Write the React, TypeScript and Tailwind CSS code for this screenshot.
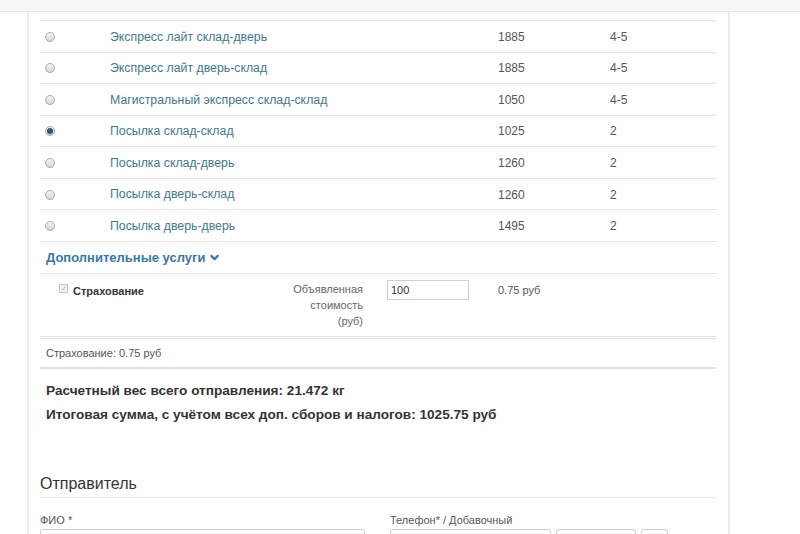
import { ChevronDown } from "lucide-react";

interface Tariff {
  name: string;
  price: string;
  days: string;
  checked?: boolean;
}

const tariffs: Tariff[] = [
  { name: "Экспресс лайт склад-дверь", price: "1885", days: "4-5" },
  { name: "Экспресс лайт дверь-склад", price: "1885", days: "4-5" },
  { name: "Магистральный экспресс склад-склад", price: "1050", days: "4-5" },
  { name: "Посылка склад-склад", price: "1025", days: "2", checked: true },
  { name: "Посылка склад-дверь", price: "1260", days: "2" },
  { name: "Посылка дверь-склад", price: "1260", days: "2" },
  { name: "Посылка дверь-дверь", price: "1495", days: "2" },
];

function Radio({ checked }: { checked?: boolean }) {
  return (
    <span className="flex h-[10px] w-[10px] items-center justify-center rounded-full border border-[#a9a9a9] bg-gradient-to-b from-[#f4f4f4] to-[#d6d6d6]">
      {checked && <span className="h-[6px] w-[6px] rounded-full bg-[#2f5673]" />}
    </span>
  );
}

function App() {
  return (
    <main
      className="h-[534px] w-[800px] overflow-hidden bg-white text-[12px] text-[#555]"
      style={{ fontFamily: '"Liberation Sans", Arial, sans-serif' }}
    >
      <div className="h-[12px] border-b border-[#e6e6e6] bg-[#f7f7f7]" />
      <div className="ml-[27px] w-[703px] border-x-2 border-[#ececec] pl-[11px] pr-[11px] pt-[8px]">
        {/* Tariffs */}
        <div className="w-[676px] border-t border-[#e4e4e4]">
          {tariffs.map((t) => (
            <div key={t.name} className="flex h-[31.57px] items-center border-b border-[#e4e4e4] pt-[1px]">
              <div className="flex w-[70px] pl-[5px]">
                <Radio checked={t.checked} />
              </div>
              <div className="w-[388px] text-[12.3px] text-[#3d7a8e]">{t.name}</div>
              <div className="w-[112px]">{t.price}</div>
              <div>{t.days}</div>
            </div>
          ))}

          {/* Extra services */}
          <div className="flex h-[32px] items-center border-b border-[#e4e4e4] pl-[6px] text-[13px] font-bold text-[#3a78a8]">
            Дополнительные услуги
            <ChevronDown size={13} strokeWidth={4} className="ml-[3px]" />
          </div>

          <div className="flex h-[65px] border-b-[3px] border-double border-[#e2e2e2] pt-[7px] text-[11px]">
            <div className="flex w-[200px] items-start pl-[19px] pt-[2px]">
              <span className="mt-[1px] flex h-[9px] w-[9px] items-center justify-center border border-[#c8c8c8] bg-[#f2f2f2] text-[7px] leading-none text-[#aaa]">
                ✓
              </span>
              <span className="ml-[5px] font-bold text-[#333]">Страхование</span>
            </div>
            <div className="w-[123px] text-right text-[11px] leading-[16px] text-[#666]">
              Объявленная
              <br />
              стоимость
              <br />
              (руб)
            </div>
            <div className="w-[135px] pl-[24px]">
              <div className="-mt-[1px] flex h-[20px] w-[82px] items-center border border-[#cfcfcf] px-[3px] text-[11px] text-[#333]">
                100
              </div>
            </div>
            <div className="pt-[1px] text-[11px]">0.75 руб</div>
          </div>

          <div className="flex h-[30px] items-center border-b-2 border-[#e0e0e0] pl-[6px] pt-[1px] text-[11px] text-[#555]">
            Страхование: 0.75 руб
          </div>

          <div className="pl-[6px] pt-[10px] text-[13.6px] font-bold leading-[24px] text-[#333]">
            <div>Расчетный вес всего отправления: 21.472 кг</div>
            <div>Итоговая сумма, с учётом всех доп. сборов и налогов: 1025.75 руб</div>
          </div>
        </div>

        {/* Sender */}
        <div className="mt-[47px] w-[676px]">
          <h3 className="border-b border-[#e8e8e8] pb-[3px] text-[16px] leading-[20px] text-[#333]">
            Отправитель
          </h3>
          <div className="mt-[15px] flex">
            <div className="w-[350px]">
              <div className="text-[11px] leading-[14px] text-[#555]">ФИО *</div>
              <div className="mt-[2px] h-[26px] w-[325px] rounded-[3px] border border-[#cccccc]" />
            </div>
            <div>
              <div className="text-[11px] leading-[14px] text-[#555]">Телефон* / Добавочный</div>
              <div className="mt-[2px] flex gap-[5px]">
                <div className="h-[26px] w-[161px] rounded-[3px] border border-[#cccccc]" />
                <div className="h-[26px] w-[80px] rounded-[3px] border border-[#cccccc]" />
                <div className="h-[26px] w-[27px] rounded-[3px] border border-[#cccccc]" />
              </div>
            </div>
          </div>
        </div>
      </div>
    </main>
  );
}

export default App;
